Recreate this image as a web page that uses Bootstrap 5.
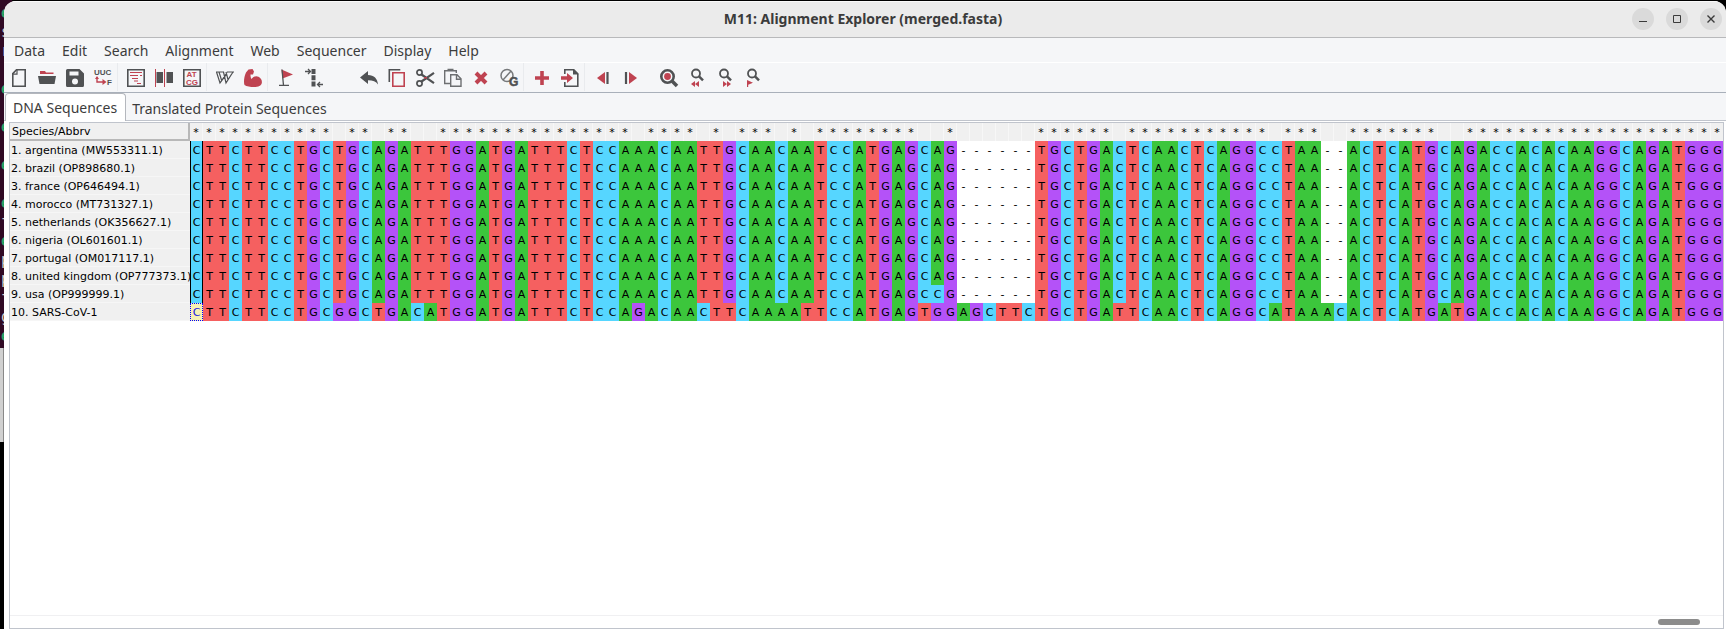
<!DOCTYPE html>
<html lang="en">
<head>
<meta charset="utf-8">
<meta name="viewport" content="width=device-width, initial-scale=1">
<title>M11: Alignment Explorer (merged.fasta)</title>
<link href="https://cdn.jsdelivr.net/npm/bootstrap@5.3.0/dist/css/bootstrap.min.css" rel="stylesheet">
<style>
  :root { --line: #c0c4cc; --panel: #f5f6f8; }
  body { background: #000; color: #3c3c3c; font: 14px/20px "Noto Sans", "Open Sans", sans-serif; }
  .desktop-edge { width: 4px; flex: none; background: #000; }
  .terminal-edge { height: 348px; background: #300a24; padding: 4px 0 0 1px; font: 15px/19px "DejaVu Sans Mono", monospace; color: #d0cfcc; }
  .terminal-edge div { height: 19px; }
  .terminal-edge .usr { color: #26a269; font-weight: bold; }
  .dock-edge { height: 94px; background: #d0d0d0; border-right: 1px solid #888; }
  .app-window { min-width: 0; background: #fff; border-radius: 12px 12px 0 0; margin-top: 1px; }
  .backdrop-left { background: linear-gradient(#300a24, #300a24) 0 0 / 12px 12px no-repeat; }
  .title-bar { height: 37px; background: #ebebeb; border-bottom: 1px solid #b8b9bb; box-shadow: inset 0 1px #fafafa; color: #3b3b3b; font-weight: 700; }
  .title-bar .side { flex: 1 1 0; }
  .win-btn { width: 22px; height: 22px; border: 0; padding: 0; border-radius: 50%; background: #dadada; }
  .win-btn svg, .tool svg { display: block; margin: auto; }
  .menu-bar { height: 25px; background: var(--panel); padding: 0 10px; gap: 17px; border-bottom: 1px solid #fff; }
  .menu-bar a { color: #3c3c3c; text-decoration: none; line-height: 17px; }
  .tool-bar { height: 30px; background: var(--panel); border-bottom: 1px solid #a9b0ba; padding-left: 1px; }
  .tool { width: 28px; height: 29px; border: 0; padding: 1px 0 0; background: none; flex: none; }
  .sep { width: 5px; height: 28px; background: linear-gradient(#e9ebee, #e9ebee) 0 0 / 1px 100% no-repeat; flex: none; }
  .gap-wide { width: 27px; flex: none; }
  .gap-slim { width: 10px; flex: none; }
  .tab-strip { height: 28px; background: var(--panel); border-bottom: 1px solid var(--line); padding-left: 1px; }
  .tab-btn { border: 1px solid transparent; border-bottom: 0; background: none; padding: 4px 5px 0; color: #3c3c3c; height: 27px; white-space: nowrap; }
  .tab-btn.active { background: #fff; border-color: #b4b7bd; border-radius: 4px 4px 0 0; height: 28px; padding: 1px 8px 0 7px; }
  .tab-body { min-height: 0; padding: 1px 2px 0 5px; }
  .grid-frame { min-height: 0; border: 1px solid var(--line); }
  .grid-scroll { min-height: 0; overflow: hidden; }
  .aln { table-layout: fixed; border-collapse: separate; border-spacing: 0; width: 0; color: #000; font: 11px/17px "DejaVu Sans", sans-serif; }
  .aln th, .aln td { height: 18px; padding: 1px 0 0; white-space: nowrap; }
  .aln th { background: #f0f0f0; font-weight: 400; }
  .aln tbody th { position: relative; z-index: 1; padding-left: 1px; box-shadow: inset 0 -1px #f6f6f6; }
  .aln td { text-align: center; background: #fff; }
  .aln col.name { width: 180px; }
  .aln col.site { width: 13px; }
  .aln thead th { text-align: center; border-right: 1px solid #f7f7f7; }
  .aln thead th.corner { text-align: left; padding-left: 2px; border-right: 2px solid #b8b8b8; border-bottom: 2px solid #b8b8b8; line-height: 15px; }
  .aln .nA { background: #3cc63c; } .aln .nT { background: #f56060; }
  .aln .nC { background: #56d6ff; } .aln .nG { background: #b452f8; }
  .aln .edge { border-left: 1px solid #000; border-right: 1px solid #000; }
  .aln .cursor { background: #f6f1b4; color: #2020e0; border: 1px dotted #0000ff; line-height: 15px; }
  .scroll-track { height: 13px; flex: none; border-top: 1px solid #f0f0f2; padding: 3px 23px 0 0; }
  .scroll-thumb { width: 42px; height: 6px; border-radius: 3px; background: #8c8c8c; }
</style>
</head>
<body class="vh-100 overflow-hidden">
<div class="d-flex h-100 backdrop-left">
  <div class="desktop-edge overflow-hidden" aria-hidden="true">
    <div class="terminal-edge"><div class="usr">e</div><div>s</div><div>r</div><div></div><div class="usr">e</div><div></div><div class="usr">e</div><div></div><div class="usr">e</div><div></div><div class="usr">e</div><div>f</div><div class="usr">e</div><div>p</div><div>p</div><div>f</div><div>g</div><div class="usr">e</div></div>
    <div class="dock-edge"></div>
  </div>
  <main class="app-window flex-grow-1 d-flex flex-column overflow-hidden">
    <header class="title-bar d-flex align-items-center flex-shrink-0">
      <div class="side"></div>
      <div>M11: Alignment Explorer (merged.fasta)</div>
      <div class="side d-flex justify-content-end pe-1" style="gap:12px">
        <button class="win-btn" aria-label="Minimize"><svg width="10" height="10"><path d="M1 7.5h8" stroke="#3b3b3b"/></svg></button>
        <button class="win-btn" aria-label="Maximize"><svg width="10" height="10"><path d="M1.5 1.5h7v7h-7z" fill="none" stroke="#3b3b3b"/></svg></button>
        <button class="win-btn" aria-label="Close"><svg width="10" height="10"><path d="M1.5 1.5l7 7m0-7l-7 7" stroke="#3b3b3b" stroke-width="1.4"/></svg></button>
      </div>
    </header>
    <nav class="menu-bar d-flex flex-shrink-0 align-items-center" aria-label="Main menu">
      <a href="#">Data</a><a href="#">Edit</a><a href="#">Search</a><a href="#">Alignment</a><a href="#">Web</a><a href="#">Sequencer</a><a href="#">Display</a><a href="#">Help</a>
    </nav>
    <div class="tool-bar d-flex flex-shrink-0" role="toolbar" aria-label="Tools">
      <button class="tool" aria-label="New"><svg width="20" height="20" fill="none" stroke="#505254" stroke-width="1.6"><path d="M7.500 1.800h8.700v16.400h-12.400v-12.600z"/><path d="M3.800 6.200h4.200V1.800" stroke-width="1.2"/></svg></button>
      <button class="tool" aria-label="Open"><svg width="20" height="20"><path d="M3 6V3h5l1 1.500h7.500V6z" fill="#bf4351"/><path d="M1 8h18l-1.500 8h-15z" fill="#505254"/></svg></button>
      <button class="tool" aria-label="Save"><svg width="20" height="20"><path fill="#505254" fill-rule="evenodd" d="M2.500 1h12L19 5.500v12a1.500 1.500 0 0 1-1.500 1.500h-15A1.500 1.500 0 0 1 1 17.500v-15A1.500 1.500 0 0 1 2.500 1zM4.500 3.500v4h9v-4zM10 10.500a3 3 0 1 0 0 6 3 3 0 0 0 0-6z"/></svg></button>
      <button class="tool" aria-label="Translate"><svg width="20" height="20" font-family="Liberation Sans" font-weight="700" font-size="8" fill="#505254"><text x="1" y="7">UUC</text><text x="14" y="17">F</text><path d="M4 9v5h6" fill="none" stroke="#bf4351" stroke-width="1.400"/><path d="M9.500 11l4 3-4 3zM2 11l2-3 2 3z" fill="#bf4351"/></svg></button>
      <span class="sep"></span>
      <button class="tool" aria-label="Edit sequence"><svg width="20" height="20" fill="none"><path d="M1.800 1.800h16.400v16.400H1.800z" stroke="#505254" stroke-width="1.600"/><path d="M4 4.500h12M4 7.500h8M14 7.500h2M6 10.500h6M8 13h4M11 15.500h4" stroke="#bf4351" stroke-width="1.200"/></svg></button>
      <button class="tool" aria-label="Align"><svg width="20" height="20"><path d="M2.500 4h6.500v11H2.500zM12.500 4h6.500v11h-6.500z" fill="#505254"/><path d="M1.500 1v18M10.500 1v18" stroke="#bf4351"/></svg></button>
      <button class="tool" aria-label="DNA"><svg width="20" height="20" font-family="Liberation Sans" font-weight="700" font-size="8" fill="#bf4351"><path d="M1.800 1.800h16.400v16.400H1.800z" stroke="#505254" stroke-width="1.600" fill="none"/><text x="4.500" y="9">AT</text><text x="4" y="16.500">CG</text></svg></button>
      <span class="sep"></span>
      <button class="tool" aria-label="Align by ClustalW"><svg width="20" height="20" fill="none" stroke="#505254"><path d="M1 4h8M1.500 4l3.500 11 6-8M4 4l2.500 8M8.500 4l2.500 11L18 4M11 4l2 7.500M12 4h7M5 15L12 4.500M11 15l5-8" stroke-width="1.200"/></svg></button>
      <button class="tool" aria-label="Align by Muscle"><svg width="20" height="20"><path fill="#bf4351" d="M5.500 1.500l4-.5 1.500 2.500-1 3H7.500c0 2 .2 3 1 4.500 1.500-2.500 4.500-3.500 7-2.200 2.500 1.200 3.800 3.700 3.300 6.200-.5 2.700-3.300 4-7.800 4-3.500 0-7.500-.5-9.500-2C.5 14 1 9 3 4.500z"/></svg></button>
      <span class="sep"></span>
      <button class="tool" aria-label="Mark site"><svg width="20" height="20"><path d="M5.500 1.500L17 6.500l-10.500 4z" fill="#bf4351"/><path d="M6 1.500l1.500 16M3 17.300h10" stroke="#505254" stroke-width="1.300"/></svg></button>
      <button class="tool" aria-label="Align marked sites"><svg width="20" height="20" fill="none" stroke="#505254"><path d="M9.500 1v18" stroke-width="4" stroke-dasharray="5 1.200"/><path d="M1 3.500h5M4 1l2.500 2.500L4 6M19 16.500h-5M16 14l-2.500 2.500L16 19" stroke-width="1.300"/></svg></button>
      <span class="gap-wide"></span>
      <button class="tool" aria-label="Undo"><svg width="20" height="20"><path fill="#505254" d="M1 9.500l8-6.500v4c6 .2 9.500 3.500 10 9.500-2-3-5-4.300-10-4.300v3.800z"/></svg></button>
      <button class="tool" aria-label="Copy"><svg width="20" height="20" fill="none" stroke-width="1.600"><path d="M2.300 14V1.800h11" stroke="#505254"/><path d="M5.800 4.800h11.400v13.400H5.800z" stroke="#bf4351"/></svg></button>
      <button class="tool" aria-label="Cut"><svg width="20" height="20" fill="none" stroke="#505254"><circle cx="4.500" cy="4.500" r="2.600" stroke-width="1.700"/><circle cx="4.500" cy="15.500" r="2.600" stroke-width="1.700"/><path d="M6.500 6.500L19 15.200M6.500 13.500L19 4.800" stroke-width="2.200"/><path d="M9 9.800h3" stroke="#bf4351" stroke-width="1.500"/></svg></button>
      <button class="tool" aria-label="Paste"><svg width="20" height="20" fill="none" stroke="#6d6f71" stroke-width="1.400"><path d="M7 15.500H1.700V2.700h11.600V5M4.500 1.500h6"/><path d="M7.700 6.700h6.300l4 4v7.600H7.700zM13.500 6.700v4.500H18"/></svg></button>
      <button class="tool" aria-label="Delete"><svg width="20" height="20"><path d="M5 5l10 10m0-10L5 15" stroke="#bf4351" stroke-width="4"/></svg></button>
      <button class="tool" aria-label="Delete gaps"><svg width="20" height="20"><circle cx="8" cy="7.500" r="6" fill="none" stroke="#77797b" stroke-width="1.500"/><path d="M4 12l8-9" stroke="#77797b" stroke-width="1.500"/><text x="10" y="18" font-family="Liberation Sans" font-weight="700" font-size="12" fill="#505254" stroke="#505254" stroke-width=".5">G</text></svg></button>
      <span class="sep"></span>
      <button class="tool" aria-label="Add"><svg width="20" height="20"><path d="M10 3v14M3 10h14" stroke="#bf4351" stroke-width="3.600"/></svg></button>
      <button class="tool" aria-label="Insert from file"><svg width="20" height="20"><path d="M4.800 6V1.800h9l4 4v12.400h-13V14" fill="none" stroke="#505254" stroke-width="1.600"/><path d="M13 1v5.500h5.500z" fill="#505254"/><path d="M1 8.300h6V5l6 5-6 5v-3.300H1z" fill="#bf4351"/></svg></button>
      <span class="sep"></span>
      <button class="tool" aria-label="Previous"><svg width="20" height="20"><path d="M12 4v12l-8-6z" fill="#bf4351"/><path d="M14.500 4v12" stroke="#505254" stroke-width="2.200"/></svg></button>
      <button class="tool" aria-label="Next"><svg width="20" height="20"><path d="M8 4v12l8-6z" fill="#bf4351"/><path d="M5 4v12" stroke="#505254" stroke-width="2.200"/></svg></button>
      <span class="gap-slim"></span>
      <button class="tool" aria-label="Find"><svg width="20" height="20"><circle cx="8.500" cy="8.500" r="6.200" fill="none" stroke="#505254" stroke-width="2.600"/><circle cx="8.500" cy="8.500" r="3.400" fill="#bf4351"/><path d="M13 13l5 5" stroke="#505254" stroke-width="3.600"/></svg></button>
      <button class="tool" aria-label="Find previous"><svg width="20" height="20"><circle cx="9" cy="5.500" r="4" fill="none" stroke="#505254" stroke-width="1.800"/><path d="M12 8.300l4 4" stroke="#505254" stroke-width="2.400"/><path d="M8 13v6l-4-3zM12 13v6l-4-3z" fill="#bf4351"/></svg></button>
      <button class="tool" aria-label="Find next"><svg width="20" height="20"><circle cx="9" cy="5.500" r="4" fill="none" stroke="#505254" stroke-width="1.800"/><path d="M12 8.300l4 4" stroke="#505254" stroke-width="2.400"/><path d="M8 13v6l4-3zM12 13v6l4-3z" fill="#bf4351"/></svg></button>
      <button class="tool" aria-label="Find marked"><svg width="20" height="20"><circle cx="9" cy="5.500" r="4" fill="none" stroke="#505254" stroke-width="1.800"/><path d="M12 8.300l4 4" stroke="#505254" stroke-width="2.400"/><path d="M4 12l6 2.700-4.800 2V19H4z" fill="#bf4351"/></svg></button>
    </div>
    <div class="tab-strip d-flex flex-shrink-0" role="tablist">
      <button class="tab-btn active" role="tab" aria-selected="true">DNA Sequences</button>
      <button class="tab-btn" role="tab" aria-selected="false">Translated Protein Sequences</button>
    </div>
    <section class="tab-body flex-grow-1 d-flex flex-column">
      <div class="grid-frame flex-grow-1 d-flex flex-column">
        <div class="grid-scroll flex-grow-1">
          <table class="aln" id="alignment"></table>
        </div>
        <div class="scroll-track d-flex justify-content-end"><div class="scroll-thumb"></div></div>
      </div>
    </section>
  </main>
</div>
<script>
  const common = 'CTTCTTCCTGCTGCAGATT' + 'TGGATGATTTCTCCAAACAATTGCAACAATCCA' + 'TGAGCAG' + '------' + 'TGCTGACTCAACTCAGGCCTAA' + '--' + 'ACTCATGCAGACCACACAAGGCAGATGGG';
  const usa = common.slice(0, 57) + 'C' + common.slice(58);
  const sars1 = 'CTTCTTCCTGCGGCTGACA' + 'TGGATGATTTCTCCAGACAACTTCAAAATTCCA' + 'TGAGTGG' + 'AGCTTC' + 'TGCTGATTCAACTCAGGCATAA' + 'AC' + 'ACTCATGATGACCACACAAGGCAGATGGG';
  const rows = [
    ['argentina (MW553311.1)', common], ['brazil (OP898680.1)', common], ['france (OP646494.1)', common],
    ['morocco (MT731327.1)', common], ['netherlands (OK356627.1)', common], ['nigeria (OL601601.1)', common],
    ['portugal (OM017117.1)', common], ['united kingdom (OP777373.1)', common], ['usa (OP999999.1)', usa], ['SARS-CoV-1', sars1]
  ];
  const sites = [...common];
  // a site is starred when every sequence carries the same base there
  const stars = sites.map((b, i) => rows.every(r => r[1][i] === b) ? '*' : '');
  const cell = (b, i, r) => {
    const cls = [b === '-' ? '' : 'n' + b];
    if (i === 0) cls.push(r === rows.length - 1 ? 'cursor' : 'edge');
    return `<td class="${cls.join(' ').trim()}">${b}</td>`;
  };
  document.getElementById('alignment').innerHTML =
    '<colgroup><col class="name">' + '<col class="site">'.repeat(sites.length) + '</colgroup>' +
    '<thead><tr><th class="corner" scope="col">Species/Abbrv</th>' + stars.map(s => `<th>${s}</th>`).join('') + '</tr></thead><tbody>' +
    rows.map(([name, seq], r) => `<tr><th scope="row">${r + 1}. ${name}</th>` + [...seq].map((b, i) => cell(b, i, r)).join('') + '</tr>').join('') + '</tbody>';
</script>
<script src="https://cdn.jsdelivr.net/npm/bootstrap@5.3.0/dist/js/bootstrap.bundle.min.js"></script>
</body>
</html>
